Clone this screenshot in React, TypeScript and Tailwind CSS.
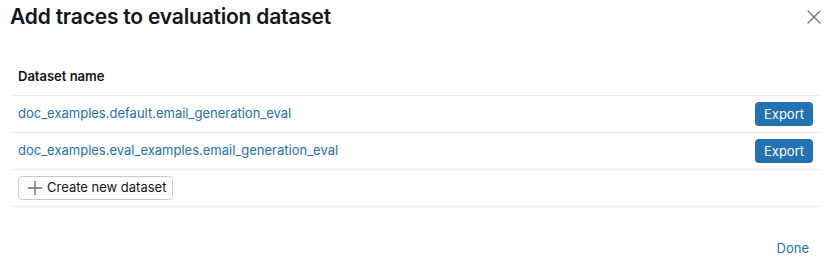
import { X } from "lucide-react"

const datasets = [
  "doc_examples.default.email_generation_eval",
  "doc_examples.eval_examples.email_generation_eval",
]

const PlusIcon = () => (
  <svg width="14" height="14" viewBox="0 0 14 14" fill="none" stroke="currentColor" strokeWidth="1.4">
    <path d="M7 0v14M0 7h14" />
  </svg>
)

export default function App() {
  return (
    <div
      className="w-[831px] h-[270px] bg-white text-[#11171c] overflow-hidden"
      style={{ fontFamily: "Inter, 'Noto Sans', sans-serif" }}
    >
      {/* header */}
      <div className="flex items-center justify-between pl-[10px] pr-[5px] pt-[3px] h-[31px]">
        <h1 className="text-[21px] leading-[28px] font-semibold tracking-[-0.2px]">
          Add traces to evaluation dataset
        </h1>
        <button className="w-[24px] h-[24px] flex items-center justify-center text-[#5f7281]">
          <X size={24} strokeWidth={1.2} />
        </button>
      </div>

      {/* table */}
      <div className="ml-[10px] mr-[9px] mt-[28px]">
        <div className="h-[37px] border-b border-[#e8ecf0] flex items-center px-[8px] text-[13px] font-semibold">
          Dataset name
        </div>
        {datasets.map((name) => (
          <div
            key={name}
            className="h-[37px] border-b border-[#e8ecf0] flex items-center justify-between pl-[8px] pr-[9px] text-[13px]"
          >
            <a className="text-[#2272b4] cursor-pointer">{name}</a>
            <button className="h-[24px] w-[58px] rounded-[4px] bg-[#2272b4] text-white text-[13px] leading-none">
              Export
            </button>
          </div>
        ))}
        <div className="h-[37px] border-b border-[#e8ecf0] flex items-center px-[8px]">
          <button className="h-[24px] w-[155px] rounded-[4px] border border-[#c0cdd8] flex items-center gap-[5px] pl-[9px] text-[13px] text-[#11171c]">
            <span className="text-[#5f7281]">
              <PlusIcon />
            </span>
            Create new dataset
          </button>
        </div>
      </div>

      {/* footer */}
      <div className="flex justify-end pr-[22px] mt-[32px]">
        <button className="text-[13px] text-[#2272b4] leading-[18px]">Done</button>
      </div>
    </div>
  )
}
